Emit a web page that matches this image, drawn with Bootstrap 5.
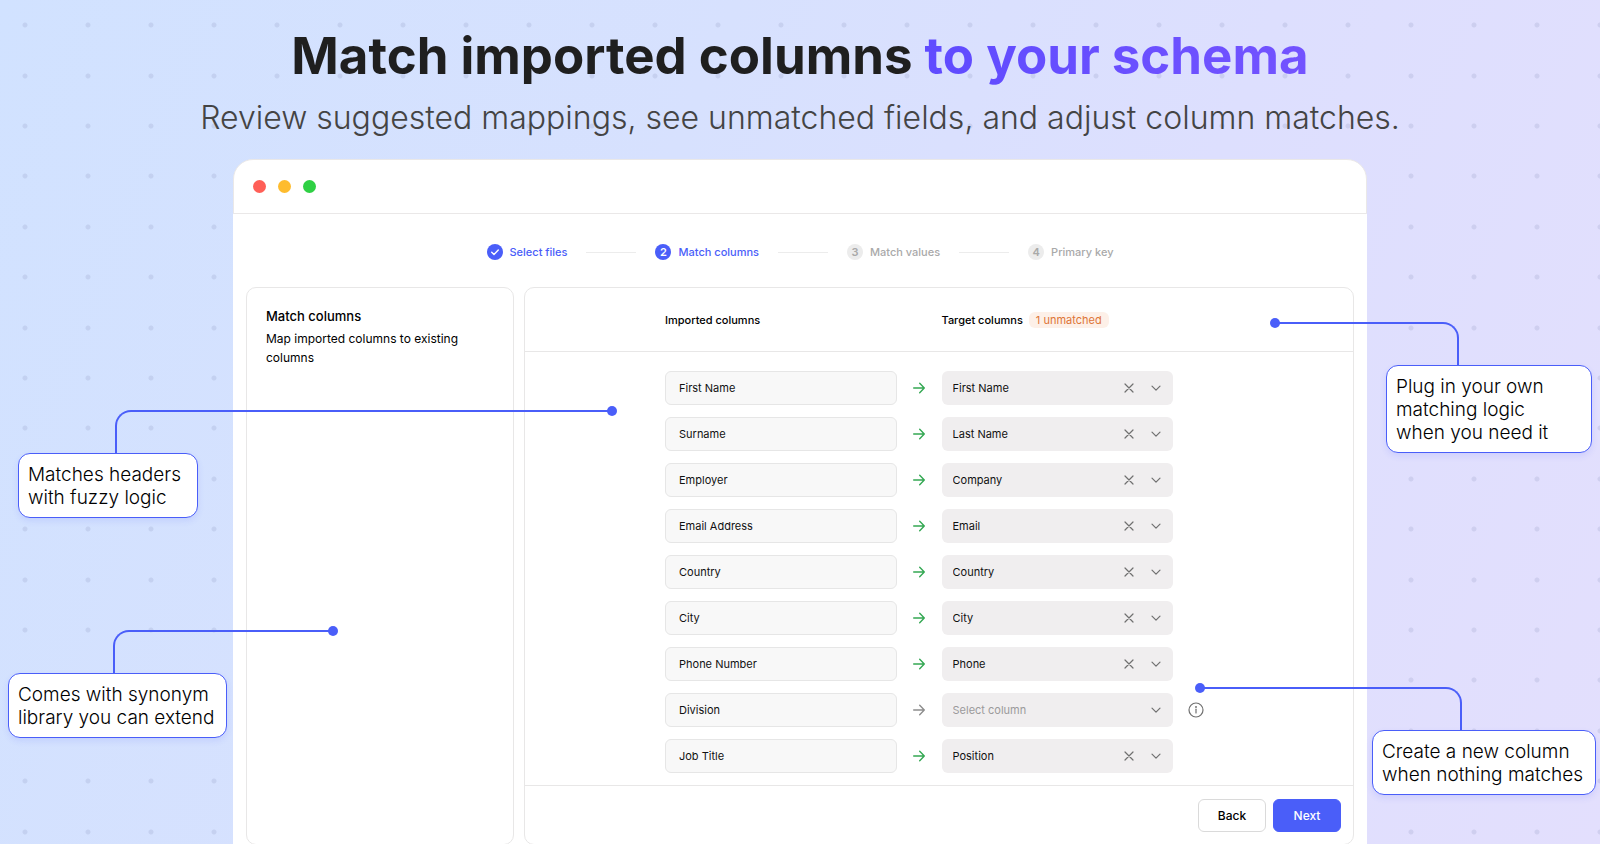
<!DOCTYPE html>
<html lang="en">
<head>
<meta charset="utf-8">
<meta name="viewport" content="width=device-width, initial-scale=1">
<title>Match imported columns to your schema</title>
<link href="https://cdn.jsdelivr.net/npm/bootstrap@5.3.0/dist/css/bootstrap.min.css" rel="stylesheet">
<style>
  :root { --accent: #4a5ef9; --line: #e8e7e7; --dot: rgba(140, 148, 190, .22); }
  body { font-family: Inter, "Liberation Sans", sans-serif; color: #111; font-size: 11px; line-height: 16px; }

  /* Pale gradient with a regular grid of dots */
  .stage {
    height: 100vh; min-height: 600px; padding: 31px 233px 0;
    background-color: #d9dffd;
    background-image:
      radial-gradient(circle at 25px 25px, var(--dot) 2px, transparent 3px),
      radial-gradient(circle at 25px 76px, var(--dot) 2px, transparent 3px),
      radial-gradient(circle at 25px 126px, var(--dot) 2px, transparent 3px),
      radial-gradient(circle at 25px 176px, var(--dot) 2px, transparent 3px),
      radial-gradient(circle at 25px 227px, var(--dot) 2px, transparent 3px),
      linear-gradient(112deg, #d1e2ff 0%, #d7e1fe 38%, #dddffe 66%, #e3dffd 100%);
    background-size: 63px 252px, 63px 252px, 63px 252px, 63px 252px, 63px 252px, 100% 100%;
  }
  .headline { font-size: 51px; line-height: 50px; font-weight: 650; color: #1f1f1f; margin: 0 -100px 17px; }
  .headline span { background: linear-gradient(90deg, #5f4bff, #7353ff); -webkit-background-clip: text; background-clip: text; color: transparent; }
  .subline { font-size: 32px; line-height: 40px; font-weight: 300; color: #444; margin: 0 -100px 21px; }

  .window-bar { height: 55px; padding: 0 19px; gap: 12px; border: 1px solid #eae8e8; border-radius: 20px 20px 0 0; }
  .light { width: 13px; height: 13px; }
  .light-red { background: #ff5f57; } .light-yellow { background: #febc2e; } .light-green { background: #2fd044; }
  .window-body { padding: 30px 13px 13px; }

  .steps { gap: 19px; margin-bottom: 27px; font-weight: 500; color: #a9a9a9; }
  .step { gap: 7px; }
  .step-mark { width: 16px; height: 16px; background: #ececec; font-weight: 600; }
  .step-on { color: var(--accent); }
  .step-on .step-mark { background: var(--accent); color: #fff; }
  .step-line { width: 50px; height: 1px; background: #ececec; }

  .panels { display: grid; grid-template-columns: 268px 1fr; gap: 10px; }
  .panel { border: 1px solid var(--line); border-radius: 10px; }
  .panel-side { padding: 19px; font-size: 12px; line-height: 19px; color: #000; }
  .panel-side h2 { font-size: 13px; line-height: 19px; font-weight: 500; margin-bottom: 3px; }
  .panel-head { height: 64px; border-bottom: 1px solid var(--line); font-weight: 500; color: #000; }
  .map-grid { display: grid; grid-template-columns: 1fr 45px 1fr 40px; align-items: center; width: 100%; max-width: 548px; margin: 0 auto; }
  .unmatched { background: #fdf0e8; color: #dd7537; border-radius: 6px; padding: 0 7px; margin-left: 6px; font-weight: 400; }
  .map-rows { padding: 19px 0 12px; row-gap: 12px; }
  .source { width: 100%; height: 34px; padding: 0 13px; border: 1px solid #e6e6e6; border-radius: 6px; background: #f8f8f8; color: #111; outline: 0; }
  .target { height: 34px; border-radius: 6px; background: #f0eeef; padding: 0 10px 0 11px; }
  .target select { appearance: none; border: 0; background: none; color: #111; outline: 0; min-width: 0; padding: 0; }
  .target .empty { color: #9b9a9b; }
  .target button { border: 0; background: none; padding: 0; margin-right: 13px; line-height: 0; }
  .glyph { width: 14px; height: 14px; fill: none; stroke: #707070; stroke-width: 1.2; stroke-linecap: round; stroke-linejoin: round; }
  .arrow { stroke: #34a853; stroke-width: 1.4; justify-self: center; }
  .arrow-off { stroke: #8d8d8d; }
  .info { width: 16px; height: 16px; justify-self: center; margin-left: 6px; }
  .panel-foot { border-top: 1px solid var(--line); padding: 13px 12px 12px; gap: 7px; }
  .act { font-size: 12px; line-height: 16px; font-weight: 500; padding: 0; width: 68px; height: 33px; border-radius: 6px; border: 1px solid #dadada; background: #fff; color: #000; }
  .act-next { background: var(--accent); border-color: var(--accent); color: #fff; }

  /* Notes pinned over the window, each with its own leader line */
  .note { position: absolute; border: 1px solid var(--accent); border-radius: 12px; background: #fff; padding: 9px 9px 8px; font-size: 19px; line-height: 23px; font-weight: 300; color: #000; box-shadow: 0 3px 6px rgba(74, 94, 249, .12); white-space: nowrap; }
  .note i { position: absolute; bottom: 100%; height: 44px; border-top: 2px solid var(--accent); }
  .note i::after { content: ""; position: absolute; top: -6px; width: 10px; height: 10px; border-radius: 50%; background: var(--accent); }
  .note-left i { border-left: 2px solid var(--accent); border-top-left-radius: 16px; }
  .note-left i::after { right: -5px; }
  .note-right i { border-right: 2px solid var(--accent); border-top-right-radius: 16px; }
  .note-right i::after { left: -5px; }
  .note-headers { left: 18px; top: 453px; width: 180px; }
  .note-headers i { left: 96px; width: 497px; }
  .note-synonym { left: 8px; top: 673px; width: 219px; }
  .note-synonym i { left: 104px; width: 220px; }
  .note-plug { right: 8px; top: 365px; width: 206px; }
  .note-plug i { right: 132px; width: 184px; }
  .note-create { right: 4px; top: 730px; width: 224px; }
  .note-create i { right: 133px; width: 262px; }
</style>
</head>
<body>
<svg class="d-none">
  <symbol id="arrow" viewBox="0 0 14 14"><path d="M1.7 7h10.6M7.7 2.3 12.3 7l-4.6 4.7"/></symbol>
  <symbol id="cross" viewBox="0 0 14 14"><path d="m3 3 8 8M11 3l-8 8"/></symbol>
  <symbol id="chev" viewBox="0 0 14 14"><path d="m3 5.2 4 4 4-4"/></symbol>
</svg>

<main class="stage position-relative overflow-hidden">
  <h1 class="headline text-center text-nowrap">Match imported columns <span>to your schema</span></h1>
  <p class="subline text-center text-nowrap">Review suggested mappings, see unmatched fields, and adjust column matches.</p>

  <section>
    <div class="window-bar bg-white d-flex align-items-center">
      <span class="light light-red rounded-circle"></span>
      <span class="light light-yellow rounded-circle"></span>
      <span class="light light-green rounded-circle"></span>
    </div>
    <div class="window-body bg-white">
      <ol class="steps list-unstyled d-flex justify-content-center align-items-center">
        <li class="step step-on d-flex align-items-center"><span class="step-mark rounded-circle d-flex"><svg viewBox="0 0 16 16" width="16" height="16" fill="none" stroke="#fff" stroke-width="1.4" stroke-linecap="round" stroke-linejoin="round"><path d="m4.7 8.3 2.3 2.2 4.3-4.6"/></svg></span>Select files</li>
        <li class="step-line"></li>
        <li class="step step-on d-flex align-items-center"><span class="step-mark rounded-circle text-center">2</span>Match columns</li>
        <li class="step-line"></li>
        <li class="step d-flex align-items-center"><span class="step-mark rounded-circle text-center">3</span>Match values</li>
        <li class="step-line"></li>
        <li class="step d-flex align-items-center"><span class="step-mark rounded-circle text-center">4</span>Primary key</li>
      </ol>

      <div class="panels">
        <aside class="panel panel-side">
          <h2>Match columns</h2>
          <p class="mb-0">Map imported columns to existing columns</p>
        </aside>

        <form class="panel">
          <div class="panel-head d-flex align-items-center">
            <div class="map-grid">
              <span>Imported columns</span><span></span>
              <span class="text-nowrap">Target columns<span class="unmatched d-inline-block">1 unmatched</span></span><span></span>
            </div>
          </div>

          <div class="map-grid map-rows">
            <input class="source" aria-label="Imported column 1" value="First Name" readonly>
            <svg class="glyph arrow"><use href="#arrow"/></svg>
            <div class="target d-flex align-items-center"><select class="flex-grow-1" aria-label="Target for First Name"><option>First Name</option></select><button type="button" aria-label="Clear"><svg class="glyph"><use href="#cross"/></svg></button><svg class="glyph"><use href="#chev"/></svg></div>
            <span></span>

            <input class="source" aria-label="Imported column 2" value="Surname" readonly>
            <svg class="glyph arrow"><use href="#arrow"/></svg>
            <div class="target d-flex align-items-center"><select class="flex-grow-1" aria-label="Target for Surname"><option>Last Name</option></select><button type="button" aria-label="Clear"><svg class="glyph"><use href="#cross"/></svg></button><svg class="glyph"><use href="#chev"/></svg></div>
            <span></span>

            <input class="source" aria-label="Imported column 3" value="Employer" readonly>
            <svg class="glyph arrow"><use href="#arrow"/></svg>
            <div class="target d-flex align-items-center"><select class="flex-grow-1" aria-label="Target for Employer"><option>Company</option></select><button type="button" aria-label="Clear"><svg class="glyph"><use href="#cross"/></svg></button><svg class="glyph"><use href="#chev"/></svg></div>
            <span></span>

            <input class="source" aria-label="Imported column 4" value="Email Address" readonly>
            <svg class="glyph arrow"><use href="#arrow"/></svg>
            <div class="target d-flex align-items-center"><select class="flex-grow-1" aria-label="Target for Email Address"><option>Email</option></select><button type="button" aria-label="Clear"><svg class="glyph"><use href="#cross"/></svg></button><svg class="glyph"><use href="#chev"/></svg></div>
            <span></span>

            <input class="source" aria-label="Imported column 5" value="Country" readonly>
            <svg class="glyph arrow"><use href="#arrow"/></svg>
            <div class="target d-flex align-items-center"><select class="flex-grow-1" aria-label="Target for Country"><option>Country</option></select><button type="button" aria-label="Clear"><svg class="glyph"><use href="#cross"/></svg></button><svg class="glyph"><use href="#chev"/></svg></div>
            <span></span>

            <input class="source" aria-label="Imported column 6" value="City" readonly>
            <svg class="glyph arrow"><use href="#arrow"/></svg>
            <div class="target d-flex align-items-center"><select class="flex-grow-1" aria-label="Target for City"><option>City</option></select><button type="button" aria-label="Clear"><svg class="glyph"><use href="#cross"/></svg></button><svg class="glyph"><use href="#chev"/></svg></div>
            <span></span>

            <input class="source" aria-label="Imported column 7" value="Phone Number" readonly>
            <svg class="glyph arrow"><use href="#arrow"/></svg>
            <div class="target d-flex align-items-center"><select class="flex-grow-1" aria-label="Target for Phone Number"><option>Phone</option></select><button type="button" aria-label="Clear"><svg class="glyph"><use href="#cross"/></svg></button><svg class="glyph"><use href="#chev"/></svg></div>
            <span></span>

            <input class="source" aria-label="Imported column 8" value="Division" readonly>
            <svg class="glyph arrow arrow-off"><use href="#arrow"/></svg>
            <div class="target d-flex align-items-center"><select class="empty flex-grow-1" aria-label="Target for Division"><option>Select column</option></select><svg class="glyph"><use href="#chev"/></svg></div>
            <svg class="glyph info" viewBox="0 0 16 16"><circle cx="8" cy="8" r="7"/><path d="M8 7.2v3.8"/><circle cx="8" cy="5" r=".4"/></svg>

            <input class="source" aria-label="Imported column 9" value="Job Title" readonly>
            <svg class="glyph arrow"><use href="#arrow"/></svg>
            <div class="target d-flex align-items-center"><select class="flex-grow-1" aria-label="Target for Job Title"><option>Position</option></select><button type="button" aria-label="Clear"><svg class="glyph"><use href="#cross"/></svg></button><svg class="glyph"><use href="#chev"/></svg></div>
            <span></span>
          </div>

          <div class="panel-foot d-flex justify-content-end">
            <button type="button" class="btn act">Back</button>
            <button type="button" class="btn act act-next">Next</button>
          </div>
        </form>
      </div>
    </div>
  </section>

  <div class="note note-left note-headers">Matches headers<br>with fuzzy logic<i></i></div>
  <div class="note note-left note-synonym">Comes with synonym<br>library you can extend<i></i></div>
  <div class="note note-right note-plug">Plug in your own<br>matching logic<br>when you need it<i></i></div>
  <div class="note note-right note-create">Create a new column<br>when nothing matches<i></i></div>
</main>
<script src="https://cdn.jsdelivr.net/npm/bootstrap@5.3.0/dist/js/bootstrap.bundle.min.js"></script>
</body>
</html>
